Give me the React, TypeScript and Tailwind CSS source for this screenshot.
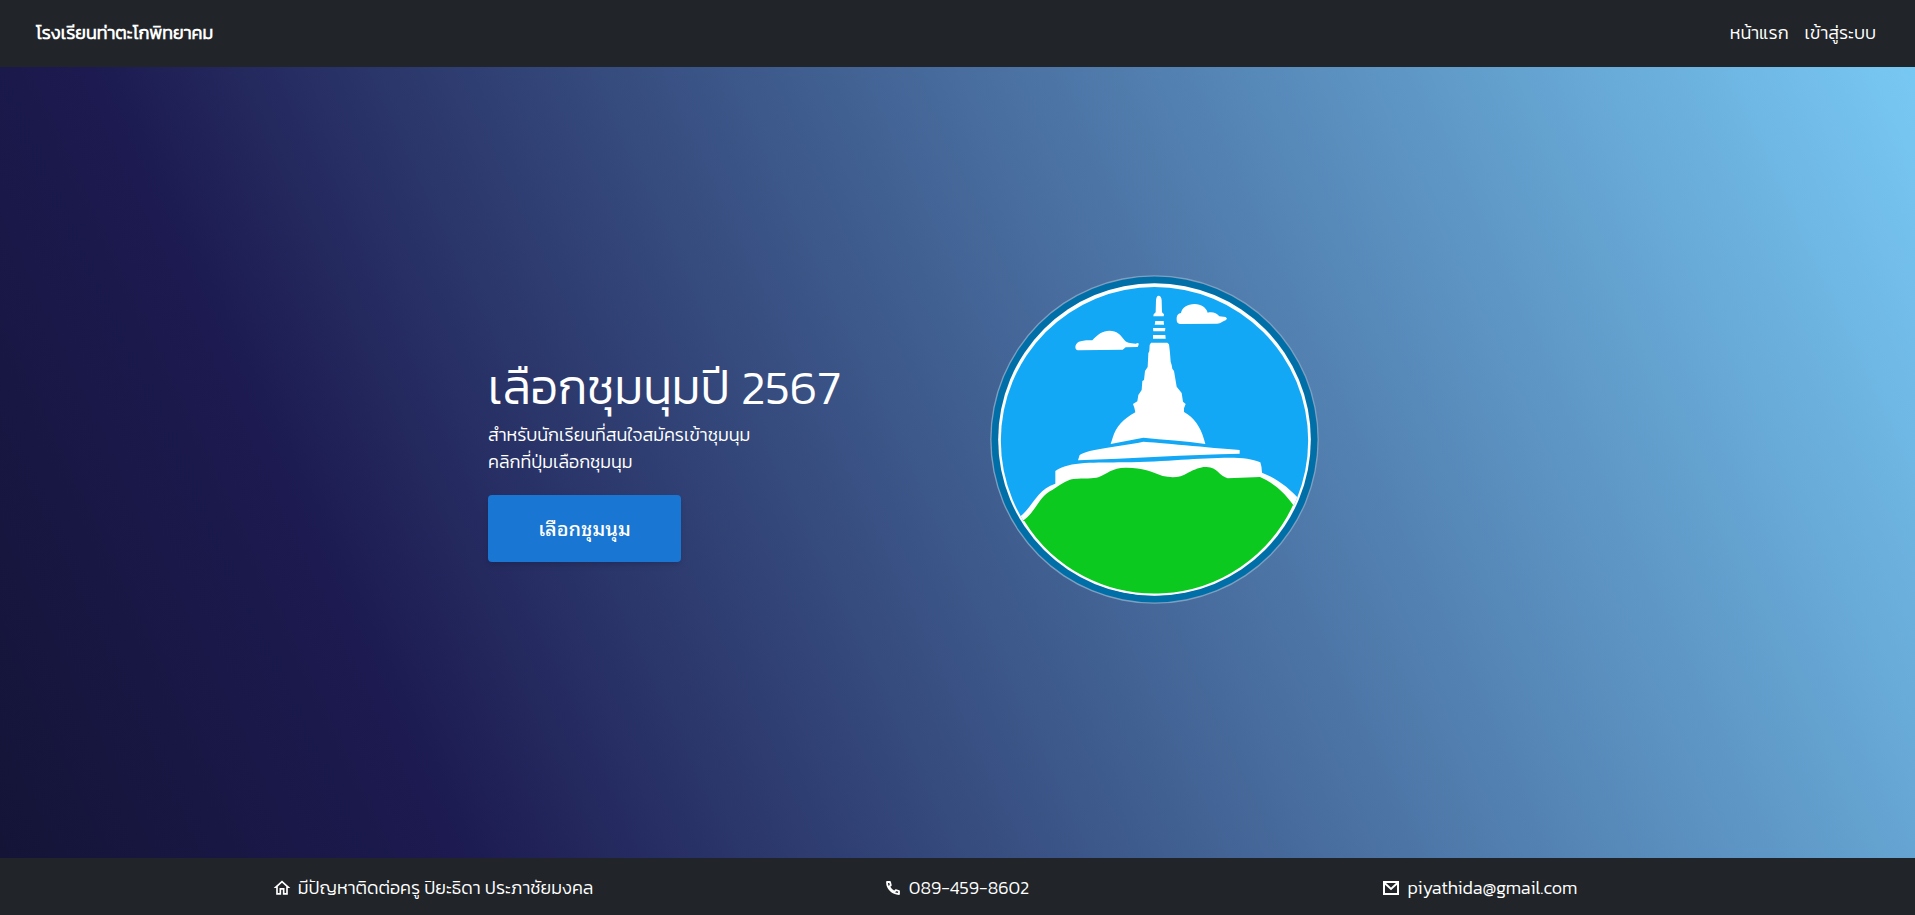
import { MdOutlineHome } from "react-icons/md";

function SchoolLogo() {
  return (
    <svg viewBox="30 30 987 987" className="w-[329px] shrink-0" role="img" aria-label="โรงเรียนท่าตะโกพิทยาคม">
      <defs>
        <clipPath id="inside">
          <circle cx="523.5" cy="527" r="461" />
        </clipPath>
      </defs>
      <circle cx="523.5" cy="523.5" r="493" fill="#7f9fc0" />
      <circle cx="523.5" cy="523.5" r="489" fill="#006fa8" />
      <circle cx="523.5" cy="523.5" r="469" fill="#fff" />
      <circle cx="523.5" cy="527" r="461" fill="#12a8f5" />
      <g fill="#fff">
        <path d="M536 92Q544 92 545 106L546 142L552 148L551 154H520L521 148L527 142L528 106Q529 92 536 92Z" />
        <path d="M526 168H551L552 179H524Z" />
        <path d="M519 189H556L555 199H520Z" />
        <path d="M519 210H556L557 221H519Z" />
        <path d="M513 233H562L567 238L570 264L572 290L575 300L577 311L582 318L587 347L590 365L605 384L609 410L617 417L612 430L612 441C642 457 662 486 672 523L676 537C616 528 550 524 490 518L392 537L398 518C408 486 430 461 466 442L463 428L459 417L472 409L475 390L485 375L487 348L492 345L495 318L503 306L505 265L508 258L509 240Z" />
        <path d="M286 246C288 231 300 225 337 226C352 208 369 197 388 197C411 197 422 209 433 225C440 233 449 235 467 236Q478 231 476 239L473 246L437 247L428 254L294 256Q286 255 286 246Z" />
        <path d="M590 164C589 150 596 145 603 144C606 128 622 117 644 117C664 117 679 128 683 143C699 140 709 144 718 154L737 156L741 161L737 166C726 169 724 176 711 176L600 177Q590 175 590 164Z" />
        <path d="M294 586L299 570C324 551 421 545 490 530C526 532 693 548 779 555V566C620 569 450 580 294 586Z" />
        <g clipPath="url(#inside)">
          <path d="M100 768C155 742 164 674 226 656V618C268 588 350 594 430 592C570 590 660 577 762 578C800 578 832 587 841 592Q845 603 846 623C890 640 925 666 965 710V900H100Z" />
          <path
            fill="#0cc920"
            d="M90 785C168 764 168 695 218 674C250 653 267 643 281 642C312 640 340 642 355 637C379 627 398 608 436 608C484 607 515 620 548 633C577 639 602 638 624 623C647 612 662 605 680 606C713 607 716 632 743 640L840 636C886 655 921 690 950 735V1010H90Z"
          />
        </g>
      </g>
      <path d="M131 769A461 461 0 0 0 941 722" fill="none" stroke="#fff" strokeWidth="5" />
    </svg>
  );
}

function PhoneIcon() {
  return (
    <svg viewBox="0 0 20 20" className="size-5" fill="none" stroke="currentColor" strokeWidth="1.8" strokeLinejoin="round">
      <path d="M4 4H7L7.8 7.2L6.2 8.6C7.4 10.9 9 12.5 11.4 13.8L12.8 12.2L16 13V16C9.4 16 4 10.6 4 4Z" />
    </svg>
  );
}

function MailIcon() {
  return (
    <svg viewBox="0 0 20 20" className="size-5" fill="none" stroke="currentColor" strokeWidth="2">
      <path d="M3 4H17V16H3ZM3 4.5L10 11L17 4.5" />
    </svg>
  );
}

export default function App() {
  return (
    <div className="flex min-h-screen flex-col font-['Kanit_Light','Kanit','Noto_Sans_Thai','Noto_Sans',sans-serif] font-light text-white">
      <header className="flex h-[67px] items-center justify-between bg-[#212529] pr-[39px] pb-[2px] pl-9">
        <a href="#" className="text-lg font-bold">โรงเรียนท่าตะโกพิทยาคม</a>
        <nav className="flex gap-4 text-lg">
          <a href="#">หน้าแรก</a>
          <a href="#login">เข้าสู่ระบบ</a>
        </nav>
      </header>

      <main className="flex flex-1 items-center justify-center bg-[linear-gradient(65deg,#141437_0%,#1c1a50_20%,#78c8f4_100%)] pb-[46px]">
        <div className="grid w-full max-w-[939px] grid-cols-[502fr_437fr] items-center">
          <section className="pt-10">
            <h1 className="mb-1 text-5xl leading-[60px]">เลือกชุมนุมปี 2567</h1>
            <p className="text-lg leading-[27px]">
              สำหรับนักเรียนที่สนใจสมัครเข้าชุมนุม
              <br />
              คลิกที่ปุ่มเลือกชุมนุม
            </p>
            <button
              type="button"
              className="mt-5 h-[67px] w-[193px] rounded bg-[#1976d2] pb-1 font-['Leelawadee_UI','Noto_Sans_Thai_Looped','Sarabun','Waree','Umpush','Kanit',sans-serif] text-xl font-medium shadow-md"
            >
              เลือกชุมนุม
            </button>
          </section>
          <SchoolLogo />
        </div>
      </main>

      <footer className="grid h-[57px] grid-cols-3 items-center bg-[#212529] px-[9%] pt-[3px] text-lg">
        <p className="flex items-center justify-center gap-1.5 pr-[3px]">
          <MdOutlineHome className="size-5" />
          มีปัญหาติดต่อครู ปิยะธิดา ประภาชัยมงคล
        </p>
        <p className="flex items-center justify-center gap-1.5 pr-[3px]">
          <PhoneIcon />
          089-459-8602
        </p>
        <p className="flex items-center justify-center gap-1.5 pr-[3px]">
          <MailIcon />
          piyathida@gmail.com
        </p>
      </footer>
    </div>
  );
}
